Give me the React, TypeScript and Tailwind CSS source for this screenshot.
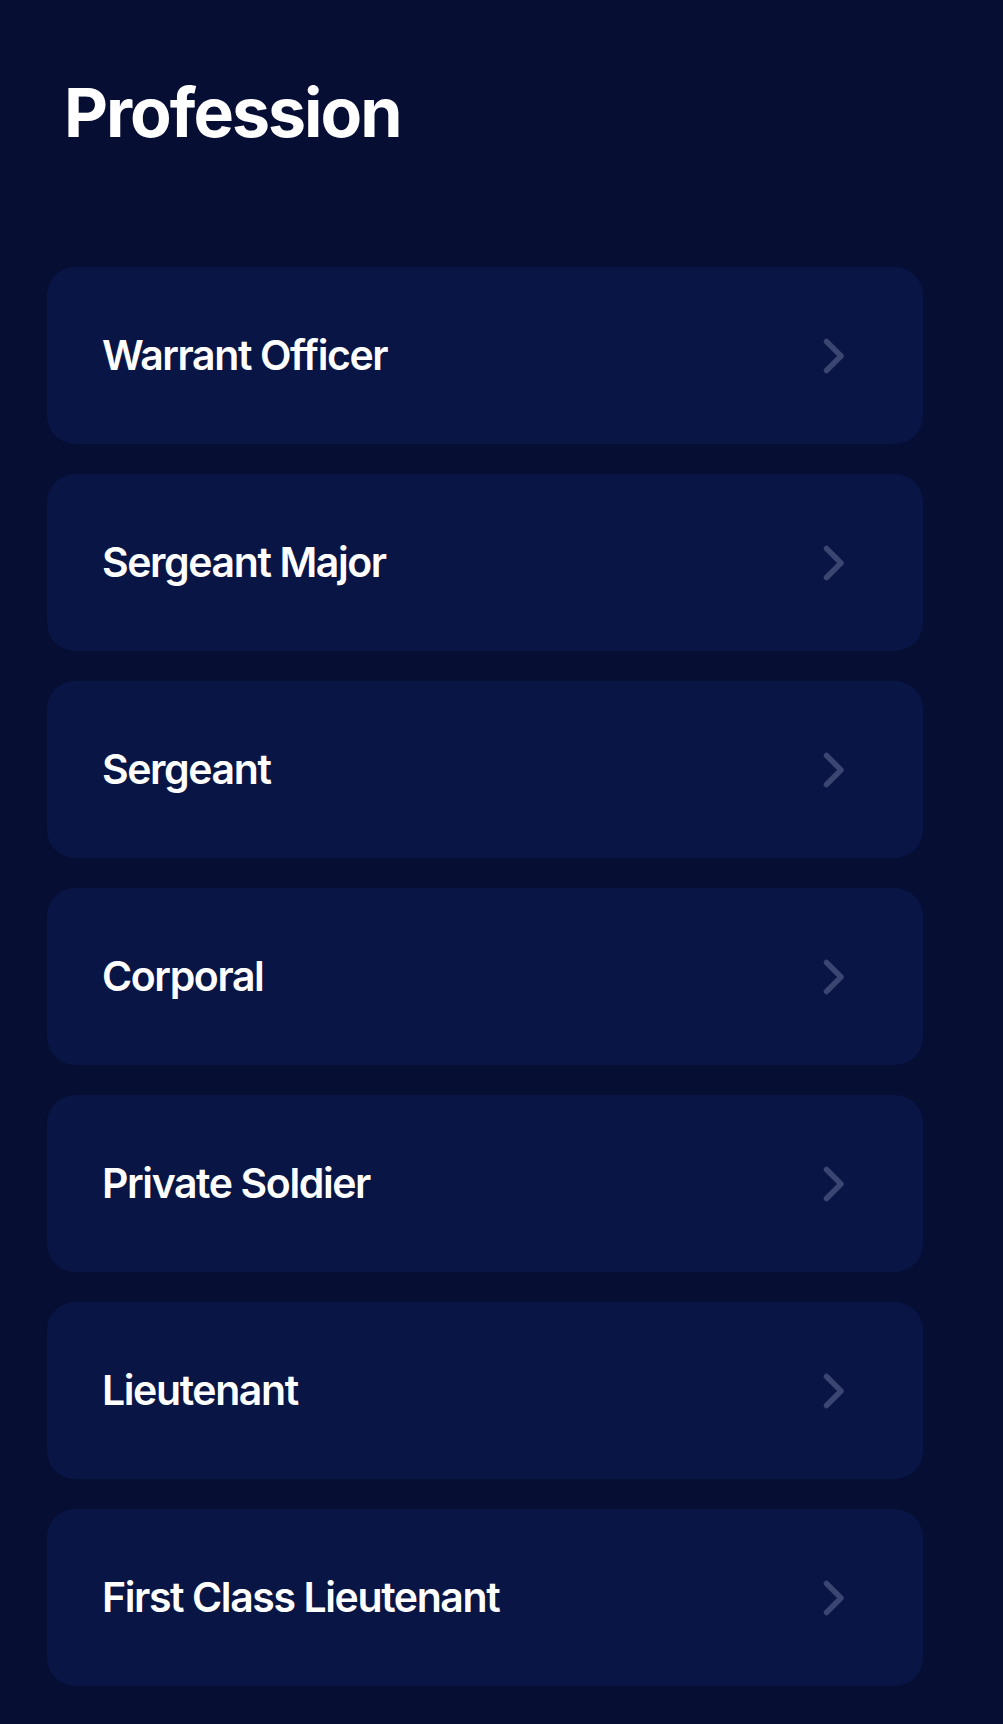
const professions = [
  "Warrant Officer",
  "Sergeant Major",
  "Sergeant",
  "Corporal",
  "Private Soldier",
  "Lieutenant",
  "First Class Lieutenant",
];

const Chevron = () => (
  <svg width="22" height="36" viewBox="0 0 22 36" fill="none">
    <path
      d="M3.5 3.5 L18 18 L3.5 32.5"
      stroke="#3a4572"
      strokeWidth="5.5"
      strokeLinecap="round"
      strokeLinejoin="round"
    />
  </svg>
);

export default function App() {
  return (
    <div
      className="min-h-[1724px] w-full bg-[#060e33] pt-[78px] pl-[47px] pr-[80px] pb-[38px]"
      style={{ fontFamily: "Inter, 'Noto Sans', sans-serif" }}
    >
      <h1 className="ml-[17px] text-[68px] leading-none font-bold text-white tracking-[-2px]">
        Profession
      </h1>
      <ul className="mt-[121px] flex flex-col gap-[30px]">
        {professions.map((name) => (
          <li
            key={name}
            className="h-[177px] rounded-[28px] bg-[#091545] flex items-center justify-between pl-[55px] pr-[78px] cursor-pointer"
          >
            <span className="text-[41px] font-semibold text-white tracking-[-1.4px] leading-none">
              {name}
            </span>
            <Chevron />
          </li>
        ))}
      </ul>
    </div>
  );
}
